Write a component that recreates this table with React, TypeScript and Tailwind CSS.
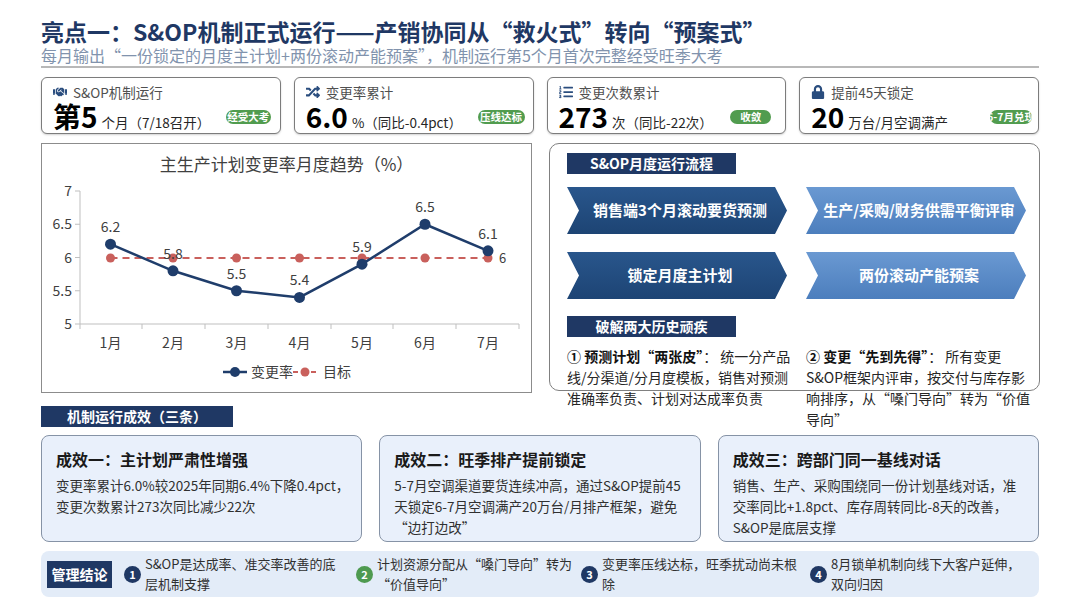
import { FaHandshake, FaRandom, FaListOl, FaLock } from "react-icons/fa";
import type { IconType } from "react-icons";

interface Kpi {
  icon: IconType;
  label: string;
  value: string;
  unit: string;
  badge: string;
  badgeClass: string;
}

const kpis: Kpi[] = [
  { icon: FaHandshake, label: "S&OP机制运行", value: "第5", unit: "个月（7/18召开）", badge: "经受大考", badgeClass: "w-[45px] mr-[-2px]" },
  { icon: FaRandom, label: "变更率累计", value: "6.0", unit: "%（同比-0.4pct）", badge: "压线达标", badgeClass: "w-[47px] mr-[-3px]" },
  { icon: FaListOl, label: "变更次数累计", value: "273", unit: "次（同比-22次）", badge: "收敛", badgeClass: "w-[41px] mr-[3px]" },
  { icon: FaLock, label: "提前45天锁定", value: "20", unit: "万台/月空调满产", badge: "6-7月兑现", badgeClass: "w-[42px] mr-[-5px]" },
];

const effects = [
  {
    title: "成效一：主计划严肃性增强",
    lines: ["变更率累计6.0%较2025年同期6.4%下降0.4pct，", "变更次数累计273次同比减少22次"],
  },
  {
    title: "成效二：旺季排产提前锁定",
    lines: ["5-7月空调渠道要货连续冲高，通过S&OP提前45", "天锁定6-7月空调满产20万台/月排产框架，避免", "“边打边改”"],
  },
  {
    title: "成效三：跨部门同一基线对话",
    lines: ["销售、生产、采购围绕同一份计划基线对话，准", "交率同比+1.8pct、库存周转同比-8天的改善，", "S&OP是底层支撑"],
  },
];

const conclusions = [
  { n: "1", color: "bg-[#1f3864]", width: "w-[232px]", lines: ["S&OP是达成率、准交率改善的底", "层机制支撑"] },
  { n: "2", color: "bg-[#4e9a50]", width: "w-[225px]", lines: ["计划资源分配从“嗓门导向”转为", "“价值导向”"] },
  { n: "3", color: "bg-[#1f3864]", width: "w-[229px]", lines: ["变更率压线达标，旺季扰动尚未根", "除"] },
  { n: "4", color: "bg-[#1f3864]", width: "flex-1", lines: ["8月锁单机制向线下大客户延伸，", "双向归因"] },
];

const xs = [109.5, 172, 235.5, 298.5, 361, 424, 487];
const rates = [6.2, 5.8, 5.5, 5.4, 5.9, 6.5, 6.1];
const yOf = (v: number) => 323 - (v - 5) * 66.5;
const boundaries = [79, 141, 204, 267, 330, 392, 455, 518];

function TrendChart() {
  const path = xs.map((x, i) => `${i === 0 ? "M" : "L"}${x} ${yOf(rates[i])}`).join(" ");
  return (
    <div className="flex h-[250px] w-[491px] flex-col border border-[#8c8c8c] bg-white">
      <div className="h-[36px] pt-[8px] text-center text-[17px] leading-[24px] text-[#404040]">
        主生产计划变更率月度趋势（%）
      </div>
      <svg width={489} height={212} viewBox="41 179 489 212" className="text-[14px]">
        {/* axes */}
        <line x1={79} y1={190} x2={79} y2={323} stroke="#bfbfbf" strokeWidth={1} />
        <line x1={79} y1={323} x2={518} y2={323} stroke="#bfbfbf" strokeWidth={1} />
        {[5, 5.5, 6, 6.5, 7].map((v) => (
          <g key={v}>
            <line x1={74} y1={yOf(v)} x2={79} y2={yOf(v)} stroke="#bfbfbf" />
            <text x={71} y={yOf(v) + 5} textAnchor="end" fill="#404040">
              {v}
            </text>
          </g>
        ))}
        {boundaries.map((x) => (
          <line key={x} x1={x} y1={323} x2={x} y2={328} stroke="#bfbfbf" />
        ))}
        {xs.map((x, i) => (
          <text key={i} x={x} y={347} textAnchor="middle" fill="#404040">
            {i + 1}月
          </text>
        ))}

        {/* target */}
        <line x1={109.5} y1={257} x2={487} y2={257} stroke="#c9605c" strokeWidth={2} strokeDasharray="7 5" />
        {xs.map((x) => (
          <circle key={x} cx={x} cy={257} r={4.5} fill="#c9605c" />
        ))}
        <text x={498} y={262} fill="#404040" className="text-[13px]">
          6
        </text>

        {/* rate */}
        <path d={path} fill="none" stroke="#1f3d6b" strokeWidth={2.5} />
        {xs.map((x, i) => (
          <g key={x}>
            <circle cx={x} cy={yOf(rates[i])} r={5.5} fill="#1f3d6b" />
            <text x={x} y={yOf(rates[i]) - 12} textAnchor="middle" fill="#404040">
              {rates[i]}
            </text>
          </g>
        ))}

        {/* legend */}
        <line x1={222} y1={371} x2={246} y2={371} stroke="#1f3d6b" strokeWidth={2.5} />
        <circle cx={234} cy={371} r={5} fill="#1f3d6b" />
        <text x={250} y={376} fill="#404040">
          变更率
        </text>
        <line x1={292} y1={371} x2={316} y2={371} stroke="#c9605c" strokeWidth={2} strokeDasharray="5 4" />
        <circle cx={304} cy={371} r={4.5} fill="#c9605c" />
        <text x={322} y={376} fill="#404040">
          目标
        </text>
      </svg>
    </div>
  );
}

const arrowClip = "[clip-path:polygon(0_0,208px_0,220px_50%,208px_100%,0_100%,12px_50%)]";

function FlowBox() {
  const dark = "bg-linear-to-b from-[#29568c] to-[#1d4474]";
  const light = "bg-linear-to-b from-[#6a99d2] to-[#4c7ebd]";
  const steps = [
    { text: "销售端3个月滚动要货预测", tone: dark },
    { text: "生产/采购/财务供需平衡评审", tone: light },
    { text: "锁定月度主计划", tone: dark },
    { text: "两份滚动产能预案", tone: light },
  ];
  return (
    <div className="h-[248px] w-[491px] rounded-[10px] border border-[#808080] bg-white px-[17px] pt-[9px]">
      <div className="h-[21px] w-[169px] bg-[#1f3864] text-center text-[14px] font-bold leading-[21px] text-white">
        S&amp;OP月度运行流程
      </div>
      <div className="mt-[13px] grid grid-cols-[220px_220px] gap-x-[19px] gap-y-[18px]">
        {steps.map((s) => (
          <div
            key={s.text}
            className={`flex h-[47px] items-center justify-center pl-[6px] text-[15px] font-bold text-white ${s.tone} ${arrowClip}`}
          >
            {s.text}
          </div>
        ))}
      </div>
      <div className="mt-[17px] h-[21px] w-[169px] bg-[#1f3864] text-center text-[14px] font-bold leading-[21px] text-white">
        破解两大历史顽疾
      </div>
      <div className="mt-[9px] grid grid-cols-[220px_240px] gap-x-[19px] whitespace-nowrap text-[14px] leading-[21px] text-[#262626]">
        <div>
          <div>
            <span className="font-bold text-[#111]">① 预测计划“两张皮”</span>： 统一分产品
          </div>
          <div>线/分渠道/分月度模板，销售对预测</div>
          <div>准确率负责、计划对达成率负责</div>
        </div>
        <div>
          <div>
            <span className="font-bold text-[#111]">② 变更“先到先得”</span>： 所有变更
          </div>
          <div>S&amp;OP框架内评审，按交付与库存影</div>
          <div>响排序，从“嗓门导向”转为“价值</div>
          <div>导向”</div>
        </div>
      </div>
    </div>
  );
}

export default function App() {
  return (
    <div className="h-[608px] w-[1080px] overflow-hidden bg-white px-[41px] pt-[17px] font-['Noto_Sans_CJK_SC','Noto_Sans',sans-serif] text-[#222]">
      {/* header */}
      <div className="border-b-2 border-[#b8b8b8] pb-[2px]">
        <h1 className="whitespace-nowrap text-[23px] font-bold leading-[29px] text-[#1f3864]">
          亮点一：S&amp;OP机制正式运行——产销协同从“救火式”转向“预案式”
        </h1>
        <div className="whitespace-nowrap text-[16px] leading-[18px] text-[#8193ad]">
          每月输出“一份锁定的月度主计划+两份滚动产能预案”，机制运行第5个月首次完整经受旺季大考
        </div>
      </div>

      {/* KPI cards */}
      <div className="mt-[9px] grid grid-cols-4 gap-[13px]">
        {kpis.map((k) => (
          <div
            key={k.label}
            className="h-[57px] rounded-[6px] border border-[#7c7c7c] bg-white px-[11px] pt-[4px] shadow-[0_1px_2px_rgba(0,0,0,0.18)]"
          >
            <div className="flex h-[20px] items-center gap-[6px] text-[13.5px] leading-[20px] text-[#505050]">
              <k.icon size={14} className="shrink-0 text-[#2a4d7e]" />
              <span>{k.label}</span>
            </div>
            <div className="flex h-[30px] items-center justify-between">
              <div className="flex items-baseline whitespace-nowrap">
                <span className="text-[28px] font-bold leading-[30px] text-black">{k.value}</span>
                <span className="ml-[4px] text-[13.5px] text-[#262626]">{k.unit}</span>
              </div>
              <div
                className={`flex h-[14px] shrink-0 justify-center overflow-hidden whitespace-nowrap rounded-full bg-[#519c4f] text-[10.5px] font-bold leading-[14px] text-white ${k.badgeClass}`}
              >
                {k.badge}
              </div>
            </div>
          </div>
        ))}
      </div>

      {/* chart + flow */}
      <div className="mt-[9px] flex items-start gap-[17px]">
        <TrendChart />
        <FlowBox />
      </div>

      {/* effects */}
      <div className="mt-[13px] h-[21px] w-[192px] bg-[#1f3864] text-center text-[14px] font-bold leading-[21px] text-white">
        机制运行成效（三条）
      </div>
      <div className="relative mt-[8px] grid grid-cols-3 gap-[17px]">
        {effects.map((e) => (
          <div
            key={e.title}
            className="h-[107px] rounded-[8px] border border-[#8693a6] bg-[#e9f0fb] px-[14px] pt-[12px]"
          >
            <div className="text-[16px] font-bold leading-[22px] text-[#1a1a1a]">{e.title}</div>
            <div className="mt-[5px] whitespace-nowrap text-[13.5px] leading-[21px] text-[#303030]">
              {e.lines.map((l) => (
                <div key={l}>{l}</div>
              ))}
            </div>
          </div>
        ))}
      </div>

      {/* conclusions */}
      <div className="mt-[9px] flex h-[46px] items-center rounded-[8px] bg-[#e3ecf8] pl-[6px]">
        <div className="mr-[12px] h-[27px] w-[65px] shrink-0 bg-[#1f3864] text-center text-[14px] font-bold leading-[27px] text-white">
          管理结论
        </div>
        {conclusions.map((c) => (
          <div key={c.n} className={`flex items-center gap-[4px] ${c.width}`}>
            <div
              className={`flex h-[17px] w-[17px] shrink-0 items-center justify-center rounded-full text-[11px] font-bold text-white ${c.color}`}
            >
              {c.n}
            </div>
            <div className="whitespace-nowrap text-[13px] leading-[20px] text-[#303030]">
              {c.lines.map((l) => (
                <div key={l}>{l}</div>
              ))}
            </div>
          </div>
        ))}
      </div>
    </div>
  );
}
